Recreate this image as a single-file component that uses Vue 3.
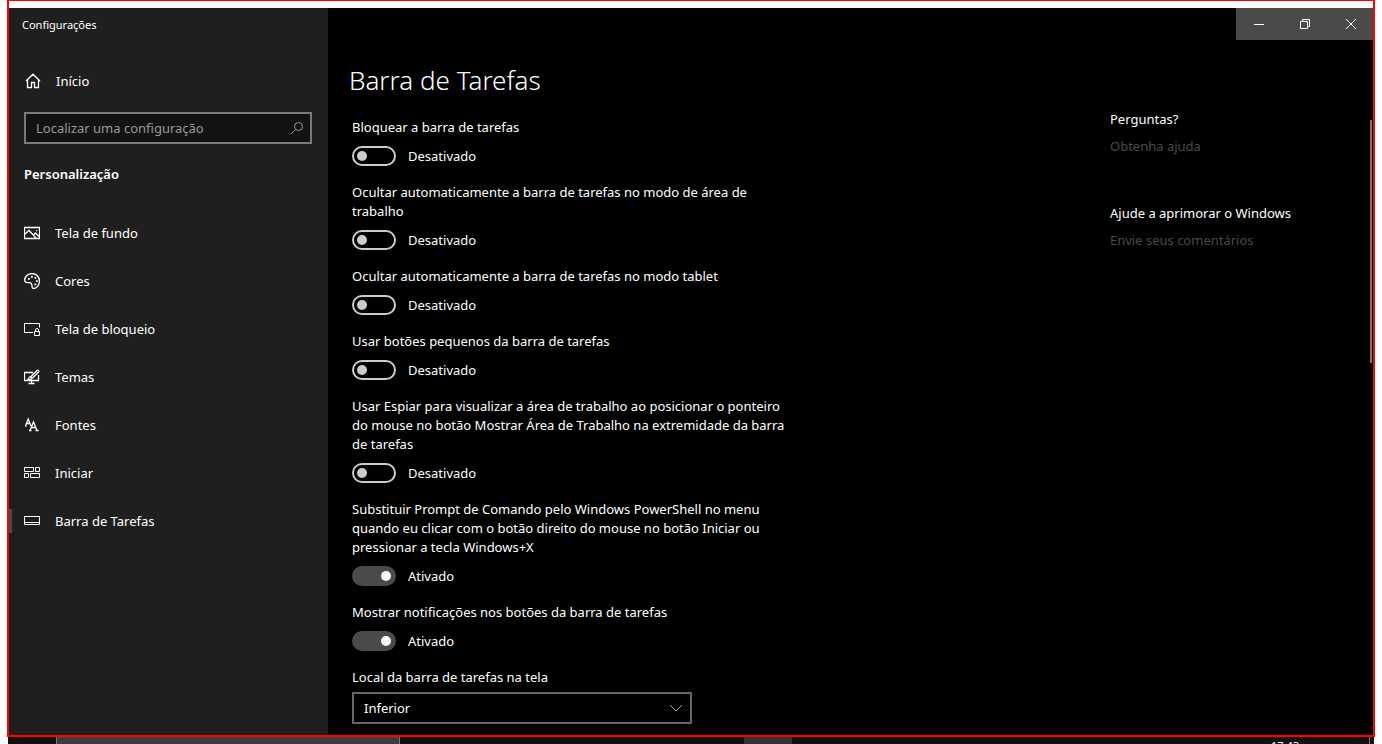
<script setup>
import { ref } from 'vue'

const search = ref('')
const position = ref('Inferior')

const nav = [
  { id: 'background', label: 'Tela de fundo' },
  { id: 'colors', label: 'Cores' },
  { id: 'lock', label: 'Tela de bloqueio' },
  { id: 'themes', label: 'Temas' },
  { id: 'fonts', label: 'Fontes' },
  { id: 'start', label: 'Iniciar' },
  { id: 'taskbar', label: 'Barra de Tarefas', active: true },
]

const options = ref([
  { id: 'lock-bar', label: 'Bloquear a barra de tarefas', on: false },
  { id: 'hide-desktop', label: 'Ocultar automaticamente a barra de tarefas no modo de área de trabalho', on: false },
  { id: 'hide-tablet', label: 'Ocultar automaticamente a barra de tarefas no modo tablet', on: false },
  { id: 'small', label: 'Usar botões pequenos da barra de tarefas', on: false },
  { id: 'peek', label: 'Usar Espiar para visualizar a área de trabalho ao posicionar o ponteiro do mouse no botão Mostrar Área de Trabalho na extremidade da barra de tarefas', on: false },
  { id: 'powershell', label: 'Substituir Prompt de Comando pelo Windows PowerShell no menu quando eu clicar com o botão direito do mouse no botão Iniciar ou pressionar a tecla Windows+X', on: true },
  { id: 'badges', label: 'Mostrar notificações nos botões da barra de tarefas', on: true },
])
</script>

<template>
  <div class="desktop">
    <div class="frame">
      <aside class="sidebar">
        <div class="app-title">Configurações</div>
        <a class="home" href="#">
          <svg class="icon bold" viewBox="0 0 16 16"><path d="M1 8 8 1.200 15 8M2.500 7v7.500h4v-5h3v5h4V7" /></svg>
          <span>Início</span>
        </a>
        <div class="search">
          <input v-model="search" type="text" aria-label="Localizar uma configuração" placeholder="Localizar uma configuração" />
          <svg class="glass" viewBox="0 0 14 14"><circle cx="8.5" cy="5.5" r="4" /><path d="M5.5 8.5 1 13" /></svg>
        </div>
        <h2 class="section">Personalização</h2>
        <nav class="nav">
          <a v-for="item in nav" :key="item.id" href="#" class="nav-item" :class="{ active: item.active }">
            <svg class="icon" :class="{ bold: ['background', 'colors', 'themes', 'fonts'].includes(item.id) }" viewBox="0 0 16 16">
              <template v-if="item.id === 'background'">
                <path d="M.5 2.500h15v11H.5zM.5 9.500 5 5.500l7.500 8M9.500 10l2-2 4 4" /><path d="M12 5h1.200v1.200H12z" class="fill" />
              </template>
              <template v-else-if="item.id === 'colors'">
                <path d="M1 8.500C-.2 4.500 3.500.5 8 .5c4.300 0 7.500 3.300 7.500 7.500S12.300 15.500 9.500 15.500c-2.500 0-.8-3.500-2.200-5.200C5.800 8.500 3.200 11 1 8.500z" />
                <path d="M4 5h1.800v1.800H4zM7 3h1.800v1.800H7zM10.500 4h1.800v1.800h-1.800zM12 7.200h1.800V9H12zM10.500 10.500h1.800v1.800h-1.800z" class="fill" />
              </template>
              <template v-else-if="item.id === 'lock'">
                <path d="M9 11.500H.5v-9h15v4M10.500 10.500h5v4h-5zM11.500 10.500V9a1.500 1.500 0 0 1 3 0v1.500" />
              </template>
              <template v-else-if="item.id === 'themes'">
                <path d="M9 3.500H.5v8h14V6M7.500 11.500v3M4.500 14.500h6M3.500 10.500c1.500-.3 1-2.500 2.700-2.700 1.600 0 2 1.700.7 2.400-.9.500-2.200.5-3.400.3zM6.800 7.800 13 1.500c1-.8 2.400.3 1.500 1.500L8.300 9.200" />
              </template>
              <template v-else-if="item.id === 'fonts'">
                <path d="M1.500 9 4.200 2 7 9M2.500 6.500h3.500M1 9h1.500M6 13.500 9.500 5l3.500 8.500M7.200 10.500h4.600M5 13.500h2.500M11.500 13.500H14.500" />
              </template>
              <template v-else-if="item.id === 'start'">
                <path d="M.5 2.500h9v4h-9zM11.500 2.500h4v4h-4zM.5 8.500h4v4h-4zM6.500 8.500h9v4h-9z" />
              </template>
              <template v-else>
                <path d="M.5 3.500h15v8H.5zM.5 9.500h15" />
              </template>
            </svg>
            <span>{{ item.label }}</span>
          </a>
        </nav>
      </aside>

      <main class="main">
        <div class="caption">
          <button type="button" aria-label="Minimizar"><svg viewBox="0 0 10 10"><path d="M0 5.500h10" /></svg></button>
          <button type="button" aria-label="Restaurar"><svg viewBox="0 0 10 10"><path d="M.5 2.500h7v7h-7zM2.500 2.500v-2h7v7h-2" /></svg></button>
          <button type="button" aria-label="Fechar"><svg viewBox="0 0 10 10"><path d="M0 0l10 10M10 0 0 10" /></svg></button>
        </div>
        <h1 class="title">Barra de Tarefas</h1>
        <div class="body">
          <div class="settings">
            <div v-for="o in options" :key="o.id" class="option">
              <label :for="o.id">{{ o.label }}</label>
              <div class="switch-row">
                <input :id="o.id" v-model="o.on" type="checkbox" role="switch" class="switch" />
                <span>{{ o.on ? 'Ativado' : 'Desativado' }}</span>
              </div>
            </div>
            <div class="choice">
              <label for="position">Local da barra de tarefas na tela</label>
              <div class="select">
                <select id="position" v-model="position">
                  <option>Inferior</option>
                  <option>Superior</option>
                  <option>Esquerda</option>
                  <option>Direita</option>
                </select>
                <svg viewBox="0 0 14 8"><path d="M1 1l6 6 6-6" /></svg>
              </div>
            </div>
          </div>
          <div class="help">
            <h3>Perguntas?</h3>
            <a href="#">Obtenha ajuda</a>
            <h3 class="second">Ajude a aprimorar o Windows</h3>
            <a href="#">Envie seus comentários</a>
          </div>
          <div class="scroll-thumb"></div>
        </div>
      </main>
    </div>
    <footer class="taskbar">
      <div class="task-search"></div>
      <div class="task-app"></div>
      <div class="clock">17:43</div>
      <div class="peek"></div>
    </footer>
  </div>
</template>

<style>
body {
  margin: 0;
  background: #fff;
}
</style>

<style scoped>
.desktop {
  height: 100vh;
  display: flex;
  flex-direction: column;
  overflow: hidden;
  font: 13px/19px "Noto Sans", "Open Sans", sans-serif;
  color: #fff;
}
.frame {
  flex: 1;
  min-height: 0;
  display: flex;
  margin: 0 7px;
  padding-top: 7px;
  border: 2px solid #f00;
  border-top-width: 1px;
  background: #fff;
}
a {
  color: inherit;
  text-decoration: none;
}
h1, h2, h3 {
  margin: 0;
  font-size: inherit;
  font-weight: 400;
}
svg {
  fill: none;
  stroke: currentColor;
  display: block;
}
.icon {
  width: 16px;
  height: 16px;
  flex: none;
}
.bold {
  stroke-width: 1.3;
}
.fill {
  fill: currentColor;
  stroke: none;
}
.sidebar {
  flex: none;
  width: 319px;
  box-sizing: border-box;
  background: #1f1f1f;
  overflow: hidden;
}
.app-title {
  padding: 7px 13px;
  font-size: 11px;
}
.home {
  display: flex;
  align-items: center;
  gap: 15px;
  height: 48px;
  margin-top: 16px;
  padding-left: 16px;
}
.search {
  display: flex;
  align-items: center;
  height: 28px;
  margin: 7px 16px 0 15px;
  padding-right: 6px;
  border: 2px solid #7a7a7a;
  background: #121212;
}
.search input {
  flex: 1;
  min-width: 0;
  padding: 0 0 0 10px;
  border: 0;
  outline: 0;
  background: none;
  color: #fff;
  font: inherit;
}
.search input::placeholder {
  color: #999;
  opacity: 1;
}
.glass {
  width: 14px;
  height: 14px;
  color: #999;
}
.section {
  padding: 21px 15px 25px;
  font-weight: 600;
}
.nav-item {
  display: flex;
  align-items: center;
  gap: 15px;
  height: 48px;
  padding-left: 15px;
}
.nav-item.active {
  background: linear-gradient(#4c4a48, #4c4a48) left center / 3px 24px no-repeat;
}
.main {
  flex: 1;
  min-width: 0;
  display: flex;
  flex-direction: column;
  background: #000;
}
.caption {
  display: flex;
  align-self: flex-end;
  background: #4c4a48;
}
.caption button {
  display: grid;
  place-items: center;
  width: 46px;
  height: 32px;
  padding: 0;
  border: 0;
  background: none;
  color: #fff;
}
.caption button:last-child {
  width: 45px;
  padding-left: 1px;
}
.caption svg {
  width: 10px;
  height: 10px;
}
.title {
  padding: 22px 21px 20px;
  font: 300 26px/36px "Noto Sans", "Open Sans", sans-serif;
}
.body {
  flex: 1;
  min-height: 0;
  display: flex;
  padding-left: 24px;
}
.settings {
  flex: 1;
  overflow-y: auto;
  scrollbar-width: none;
}
.option {
  display: flex;
  flex-direction: column;
  gap: 9px;
  max-width: 446px;
  padding-bottom: 17px;
}
.switch-row {
  display: flex;
  align-items: flex-end;
  gap: 12px;
  height: 20px;
}
.switch {
  appearance: none;
  display: flex;
  align-items: center;
  box-sizing: border-box;
  width: 44px;
  height: 20px;
  margin: 0;
  padding: 0 3px;
  border: 2px solid #ccc;
  border-radius: 10px;
}
.switch::before {
  content: "";
  width: 10px;
  height: 10px;
  border-radius: 50%;
  background: #ccc;
}
.switch:checked {
  justify-content: flex-end;
  border-color: #4c4a48;
  background: #4c4a48;
}
.switch:checked::before {
  background: #fff;
}
.choice {
  display: flex;
  flex-direction: column;
  gap: 5px;
}
.select {
  position: relative;
  width: 340px;
}
.select select {
  appearance: none;
  width: 100%;
  height: 32px;
  padding: 0 10px;
  border: 2px solid #666;
  border-radius: 0;
  background: #000;
  color: #fff;
  font: inherit;
}
.select svg {
  position: absolute;
  right: 9px;
  top: 12px;
  width: 14px;
  height: 8px;
  color: #aaa;
  pointer-events: none;
}
.help {
  flex: none;
  display: flex;
  flex-direction: column;
  align-items: flex-start;
  gap: 8px;
  width: 260px;
  margin-top: -8px;
}
.help a {
  color: #4c4a48;
}
.help .second {
  margin-top: 40px;
}
.scroll-thumb {
  flex: none;
  width: 2px;
  height: 243px;
  margin: 2px 1px 0 0;
  background: #7a7a7a;
}
.taskbar {
  flex: none;
  display: flex;
  height: 7px;
  margin: 0 8px;
  overflow: hidden;
  background: #101010;
}
.task-search {
  width: 342px;
  margin-left: 48px;
  border: solid #777;
  border-width: 0 1px;
  background: #3f3f3f;
}
.task-app {
  width: 48px;
  margin-left: 344px;
  background: #333;
}
.clock {
  margin-left: auto;
  font-size: 11px;
  line-height: 17px;
}
.peek {
  width: 4px;
  margin-left: 70px;
  border-left: 1px solid #777;
}
</style>
